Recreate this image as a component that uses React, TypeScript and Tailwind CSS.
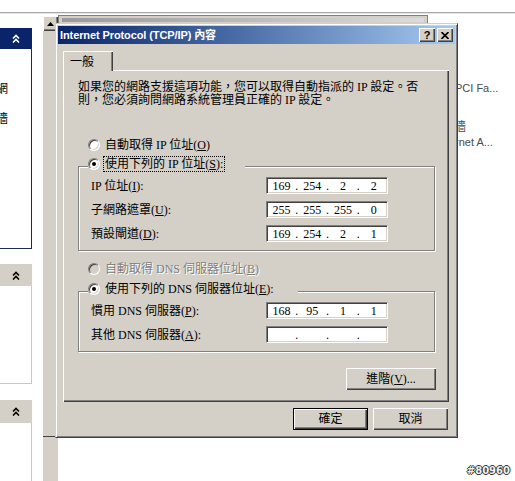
import React from "react";

const BODY = "font-['Liberation_Serif','Noto_Sans_CJK_TC',serif]";

function Chevron({ color }: { color: string }) {
  return (
    <svg width="8" height="9" viewBox="0 0 8 9">
      <path d="M1 4.5 L4 1.5 L7 4.5" fill="none" stroke={color} strokeWidth="1.6" />
      <path d="M1 8.5 L4 5.5 L7 8.5" fill="none" stroke={color} strokeWidth="1.6" />
    </svg>
  );
}

function Radio({ checked, disabled }: { checked?: boolean; disabled?: boolean }) {
  return (
    <span
      className={`flex h-[12px] w-[12px] shrink-0 items-center justify-center rounded-full border border-t-[#808080] border-l-[#808080] border-r-white border-b-white shadow-[inset_1px_1px_0_#404040,inset_-1px_-1px_0_#d4d0c8] ${
        disabled ? "bg-[#d4d0c8]" : "bg-white"
      }`}
    >
      {checked && <span className="h-[4px] w-[4px] rounded-full bg-black" />}
    </span>
  );
}

function IpField({ parts }: { parts: string[] }) {
  return (
    <div className="flex h-[17px] w-[122px] items-center border border-t-[#808080] border-l-[#808080] border-r-white border-b-white bg-white pl-[1px] text-[12px] leading-none shadow-[inset_1px_1px_0_#404040,inset_-1px_-1px_0_#d4d0c8]">
      {parts.map((p, i) => (
        <React.Fragment key={i}>
          <span className="w-[27px] text-center">{p}</span>
          {i < 3 && <span className="w-[4px] text-center">.</span>}
        </React.Fragment>
      ))}
    </div>
  );
}

function Btn({ children, def, className = "" }: { children: React.ReactNode; def?: boolean; className?: string }) {
  return (
    <div
      className={`flex h-[22px] items-center justify-center bg-[#d4d0c8] text-[12px] leading-none shadow-[inset_1px_1px_0_#fff,inset_-1px_-1px_0_#404040,inset_-2px_-2px_0_#808080] ${
        def ? "border border-black" : ""
      } ${className}`}
    >
      {children}
    </div>
  );
}

export default function App() {
  return (
    <div className={`relative h-[481px] w-[515px] overflow-hidden bg-white text-black ${BODY}`}>
      {/* top separator line */}
      <div className="absolute left-0 top-[12px] h-[1px] w-full bg-[#a8a8a8]" />
      <div className="absolute left-0 top-[13px] h-[1px] w-full bg-[#e4e4e4]" />

      {/* left task pane */}
      <div className="absolute left-0 top-[28px] flex h-[453px] w-[32px] flex-col">
        <div className="flex h-[21px] items-center justify-center bg-[#0a246a] pr-[1px]">
          <Chevron color="#ffffff" />
        </div>
        <div className="flex h-[200px] flex-col gap-[18px] overflow-hidden border-r border-b border-[#1a2a5a] bg-white pt-[34px] text-[12px] leading-[12px]">
          <span className="-ml-[4px]">網</span>
          <span className="-ml-[4px]">牆</span>
        </div>
        <div className="h-[15px]" />
        <div className="flex h-[22px] items-center justify-center bg-[#d4d0c8] pr-[1px]">
          <Chevron color="#000000" />
        </div>
        <div className="h-[98px] border-r border-b border-[#c8c8c8] bg-white" />
        <div className="h-[16px]" />
        <div className="flex h-[23px] items-center justify-center bg-[#d4d0c8] pr-[1px]">
          <Chevron color="#000000" />
        </div>
        <div className="flex-1 border-r border-[#c8c8c8] bg-white" />
      </div>

      {/* scrollbar */}
      <div className="absolute left-[43px] top-[16px] bottom-0 flex w-[15px] flex-col bg-[#d4d0c8]">
        <div className="flex h-[15px] items-center justify-center shadow-[inset_1px_1px_0_#fff,inset_-1px_-1px_0_#404040,inset_-2px_-2px_0_#808080]">
          <svg width="7" height="4" viewBox="0 0 7 4">
            <path d="M0 4 L3.5 0 L7 4 Z" fill="#000" />
          </svg>
        </div>
      </div>
      <div className="absolute left-[43px] top-[436px] h-[1px] w-[13px] bg-[#404040]" />

      {/* background window frame */}
      <div className="absolute left-[58px] top-[15px] h-[14px] w-[370px] border-l border-t border-r border-[#808080] bg-[#d4d0c8] px-[3px] pt-[2px]">
        <div className="h-[4px] bg-linear-to-r from-[#9a9a9a] to-[#dcdcdc]" />
      </div>

      {/* background list text on the right */}
      <div className="absolute left-[455px] top-[82px] font-['Liberation_Sans','Noto_Sans_CJK_TC',sans-serif] text-[11px] leading-[12px] text-[#4a4a4a]">
        PCI Fa...
      </div>
      <div className="absolute left-[454px] top-[121px] text-[12px] leading-[12px] text-[#4a4a4a]">牆</div>
      <div className="absolute left-[455px] top-[136px] font-['Liberation_Sans','Noto_Sans_CJK_TC',sans-serif] text-[11px] leading-[12px] text-[#4a4a4a]">
        rnet A...
      </div>

      {/* dialog */}
      <div className="absolute left-[55px] top-[23px] flex h-[415px] w-[403px] flex-col border border-t-[#d4d0c8] border-l-[#d4d0c8] border-r-[#404040] border-b-[#404040] bg-[#d4d0c8] p-[2px] shadow-[inset_1px_1px_0_#fff,inset_-1px_-1px_0_#808080]">
        {/* title bar */}
        <div className="flex h-[18px] shrink-0 items-center bg-linear-to-r from-[#0a246a] to-[#a6caf0] pl-[2px] pr-[2px]">
          <span className="whitespace-nowrap font-['Liberation_Sans','Noto_Sans_CJK_TC',sans-serif] text-[11px] font-bold leading-none tracking-[-0.1px] text-white">
            Internet Protocol (TCP/IP) 內容
          </span>
          <div className="ml-auto flex gap-[2px]">
            <div className="flex h-[14px] w-[16px] items-center justify-center bg-[#d4d0c8] font-['Liberation_Sans',sans-serif] text-[11px] font-bold leading-none shadow-[inset_1px_1px_0_#fff,inset_-1px_-1px_0_#404040,inset_-2px_-2px_0_#808080]">
              ?
            </div>
            <div className="flex h-[14px] w-[16px] items-center justify-center bg-[#d4d0c8] shadow-[inset_1px_1px_0_#fff,inset_-1px_-1px_0_#404040,inset_-2px_-2px_0_#808080]">
              <svg width="8" height="7" viewBox="0 0 8 7">
                <path d="M0.5 0 L7.5 7 M7.5 0 L0.5 7" stroke="#000" strokeWidth="1.6" />
              </svg>
            </div>
          </div>
        </div>

        {/* body */}
        <div className="flex flex-col pl-[5px] pr-[6px]">
          {/* tab */}
          <div className="relative z-10 mt-[7px] flex h-[20px] w-[50px] items-center border-t border-l border-white bg-[#d4d0c8] pl-[6px] text-[12px] leading-none shadow-[inset_-1px_0_0_#404040,inset_-2px_0_0_#808080]">
            一般
          </div>

          {/* tab panel */}
          <div className="-mt-[1px] flex h-[332px] flex-col border-t border-l border-white pt-[10px] pl-[14px] pr-[14px] shadow-[inset_-1px_-1px_0_#404040,inset_-2px_-2px_0_#808080]">
            <p className="whitespace-nowrap text-[12px] leading-[13px]">
              如果您的網路支援這項功能，您可以取得自動指派的 IP 設定。否
              <br />
              則，您必須詢問網路系統管理員正確的 IP 設定。
            </p>

            <div className="ml-[10px] mt-[30px] flex h-[16px] items-center gap-[5px] text-[12px] leading-none">
              <Radio />
              <span>
                自動取得 IP 位址(<u>O</u>)
              </span>
            </div>

            {/* IP group */}
            <div className="mt-[13px] border border-[#808080] pb-[8px] pl-[12px] shadow-[inset_1px_1px_0_#fff,1px_1px_0_#fff]">
              <div className="-mt-[11px] ml-[-3px] flex h-[16px] w-[157px] items-center gap-[3px] bg-[#d4d0c8] text-[12px] leading-none">
                <Radio checked />
                <span className="border border-dotted border-black px-[1px] py-[1px]">
                  使用下列的 IP 位址(<u>S</u>):
                </span>
              </div>
              <div className="mt-[5px] grid grid-cols-[175px_122px] items-center gap-y-[7px] text-[12px] leading-none">
                <span>
                  IP 位址(<u>I</u>):
                </span>
                <IpField parts={["169", "254", "2", "2"]} />
                <span>
                  子網路遮罩(<u>U</u>):
                </span>
                <IpField parts={["255", "255", "255", "0"]} />
                <span>
                  預設閘道(<u>D</u>):
                </span>
                <IpField parts={["169", "254", "2", "1"]} />
              </div>
            </div>

            <div className="ml-[10px] mt-[10px] flex h-[16px] items-center gap-[5px] text-[12px] leading-none text-[#808080] [text-shadow:1px_1px_0_#fff]">
              <Radio disabled />
              <span>
                自動取得 DNS 伺服器位址(<u>B</u>)
              </span>
            </div>

            {/* DNS group */}
            <div className="mt-[14px] border border-[#808080] pb-[8px] pl-[12px] shadow-[inset_1px_1px_0_#fff,1px_1px_0_#fff]">
              <div className="-mt-[11px] ml-[-3px] flex h-[16px] w-[210px] items-center gap-[5px] bg-[#d4d0c8] text-[12px] leading-none">
                <Radio checked />
                <span>
                  使用下列的 DNS 伺服器位址(<u>E</u>):
                </span>
              </div>
              <div className="mt-[5px] grid grid-cols-[175px_122px] items-center gap-y-[7px] text-[12px] leading-none">
                <span>
                  慣用 DNS 伺服器(<u>P</u>):
                </span>
                <IpField parts={["168", "95", "1", "1"]} />
                <span>
                  其他 DNS 伺服器(<u>A</u>):
                </span>
                <IpField parts={["", "", "", ""]} />
              </div>
            </div>

            <Btn className="-mr-[1px] mt-[16px] w-[90px] self-end">
              進階(<u>V</u>)...
            </Btn>
          </div>

          {/* bottom buttons */}
          <div className="mr-[1px] mt-[6px] flex justify-end gap-[5px]">
            <Btn def className="w-[75px]">
              確定
            </Btn>
            <Btn className="w-[75px]">取消</Btn>
          </div>
        </div>
      </div>

      {/* watermark */}
      <div className="absolute bottom-[5px] right-[5px] font-['DejaVu_Sans',sans-serif] text-[10px] font-bold leading-none text-[#f0f0f0] [text-shadow:1px_0_0_#333,-1px_0_0_#333,0_1px_0_#333,0_-1px_0_#333]">
        #80960
      </div>
    </div>
  );
}
